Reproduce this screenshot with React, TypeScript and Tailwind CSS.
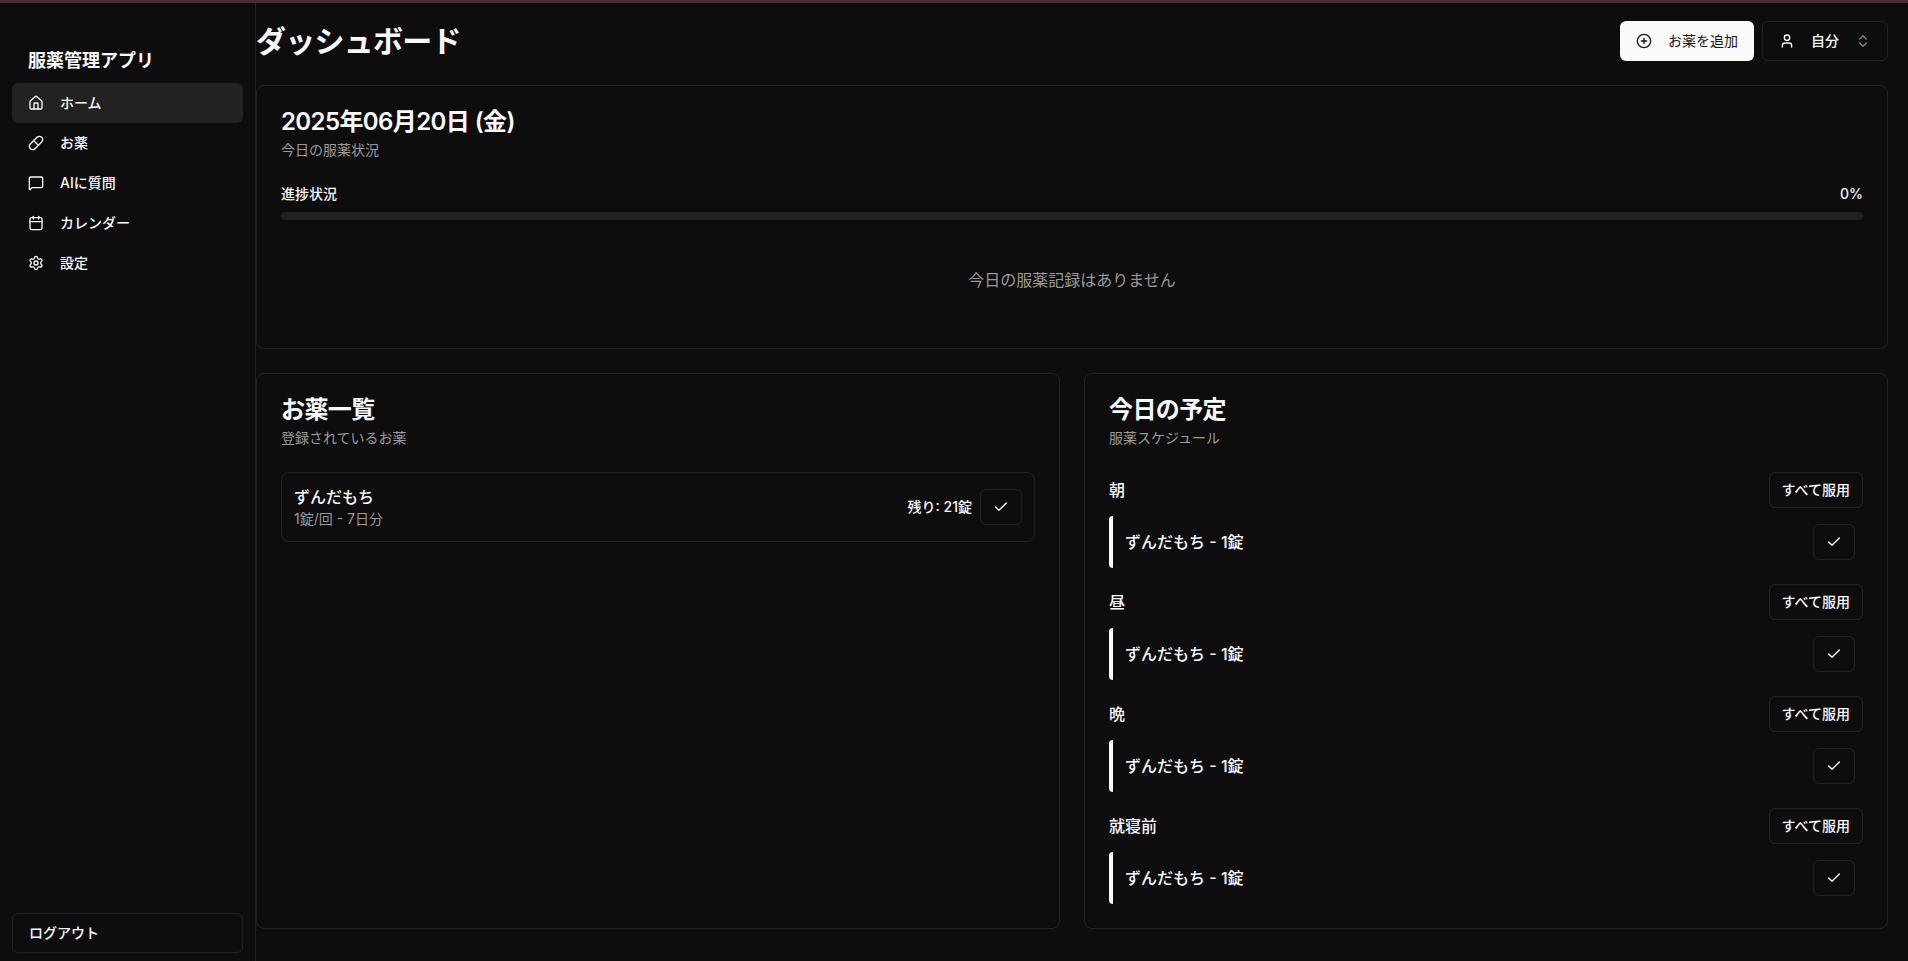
import type { ReactNode } from "react";
import {
  Calendar,
  Check,
  ChevronsUpDown,
  CirclePlus,
  House,
  MessageSquare,
  Pill,
  Settings,
  User,
  type LucideIcon,
} from "lucide-react";

const navItems: { label: string; icon: LucideIcon; active?: boolean }[] = [
  { label: "ホーム", icon: House, active: true },
  { label: "お薬", icon: Pill },
  { label: "AIに質問", icon: MessageSquare },
  { label: "カレンダー", icon: Calendar },
  { label: "設定", icon: Settings },
];

const slots = ["朝", "昼", "晩", "就寝前"];

function Sidebar() {
  return (
    <aside className="flex w-64 shrink-0 flex-col border-r border-[#232323] px-3 pb-2 pt-10">
      <h2 className="mb-1 px-4 text-lg font-semibold leading-9">服薬管理アプリ</h2>
      <nav className="flex flex-col">
        {navItems.map(({ label, icon: Icon, active }) => (
          <a
            key={label}
            href="#"
            aria-current={active ? "page" : undefined}
            className={
              active
                ? "flex h-10 items-center gap-4 rounded-md bg-[#222222] px-4 text-sm font-medium"
                : "flex h-10 items-center gap-4 rounded-md px-4 text-sm font-medium"
            }
          >
            <Icon size={16} aria-hidden="true" />
            {label}
          </a>
        ))}
      </nav>
      <button
        type="button"
        className="mt-auto flex h-10 items-center rounded-md border border-[#232323] px-4 text-sm font-medium"
      >
        ログアウト
      </button>
    </aside>
  );
}

function Card({ title, description, children }: { title: string; description: string; children: ReactNode }) {
  return (
    <section className="rounded-lg border border-[#232323] p-6">
      <h2 className="text-2xl font-semibold leading-6 tracking-tight">{title}</h2>
      <p className="mt-1.5 text-sm text-[#9a9a9a]">{description}</p>
      <div className="mt-6">{children}</div>
    </section>
  );
}

function CheckButton({ label }: { label: string }) {
  return (
    <button
      type="button"
      aria-label={label}
      className="flex h-9 items-center justify-center rounded-md border border-[#232323] px-3"
    >
      <Check size={16} aria-hidden="true" />
    </button>
  );
}

function Schedule() {
  return (
    <div className="flex flex-col gap-4">
      {slots.map((slot) => (
        <div key={slot} className="flex flex-col gap-2">
          <div className="flex items-center justify-between">
            <h3 className="font-medium">{slot}</h3>
            <button
              type="button"
              className="h-9 rounded-md border border-[#232323] px-3 text-sm font-medium"
            >
              すべて服用
            </button>
          </div>
          <div className="flex items-center justify-between rounded-sm border-l-4 border-[#fafafa] py-2 pl-3 pr-2 font-medium">
            <span>ずんだもち - 1錠</span>
            <CheckButton label="服用" />
          </div>
        </div>
      ))}
    </div>
  );
}

export default function App() {
  return (
    <div className="flex min-h-screen flex-col border-t-3 border-[#4a2d33] bg-[#0d0d0d] font-['Inter','Noto_Sans_CJK_JP',sans-serif] text-[#fafafa]">
      <div className="flex flex-1">
        <Sidebar />
        <main className="min-w-0 flex-1 pb-8 pr-5 pt-4">
          <header className="flex items-center justify-between pt-0.5">
            <h1 className="text-3xl font-bold tracking-tight">ダッシュボード</h1>
            <div className="flex items-center gap-2">
              <button
                type="button"
                className="flex h-10 items-center gap-4 rounded-md bg-[#fafafa] px-4 text-sm text-[#171717]"
              >
                <CirclePlus size={16} aria-hidden="true" />
                お薬を追加
              </button>
              <button
                type="button"
                className="flex h-10 items-center rounded-md border border-[#232323] px-4 text-sm font-medium"
              >
                <User size={16} className="mr-4" aria-hidden="true" />
                自分
                <ChevronsUpDown size={16} className="ml-4 opacity-50" aria-hidden="true" />
              </button>
            </div>
          </header>
          <div className="mt-6 flex flex-col gap-6">
            <Card title="2025年06月20日 (金)" description="今日の服薬状況">
              <div className="flex items-center justify-between text-sm font-medium">
                <span>進捗状況</span>
                <span>0%</span>
              </div>
              <div
                role="progressbar"
                aria-label="進捗状況"
                aria-valuemin={0}
                aria-valuemax={100}
                aria-valuenow={0}
                className="mt-2 h-2 rounded-full bg-[#222222]"
              />
              <p className="mt-4 py-8 text-center text-[#9a9a9a]">今日の服薬記録はありません</p>
            </Card>
            <div className="grid grid-cols-2 gap-6">
              <Card title="お薬一覧" description="登録されているお薬">
                <div className="flex items-center justify-between rounded-lg border border-[#232323] p-3">
                  <div>
                    <h3 className="font-medium">ずんだもち</h3>
                    <p className="text-sm text-[#9a9a9a]">1錠/回 - 7日分</p>
                  </div>
                  <div className="flex items-center gap-2 text-sm font-medium">
                    <span>残り: 21錠</span>
                    <CheckButton label="服用" />
                  </div>
                </div>
              </Card>
              <Card title="今日の予定" description="服薬スケジュール">
                <Schedule />
              </Card>
            </div>
          </div>
        </main>
      </div>
    </div>
  );
}
